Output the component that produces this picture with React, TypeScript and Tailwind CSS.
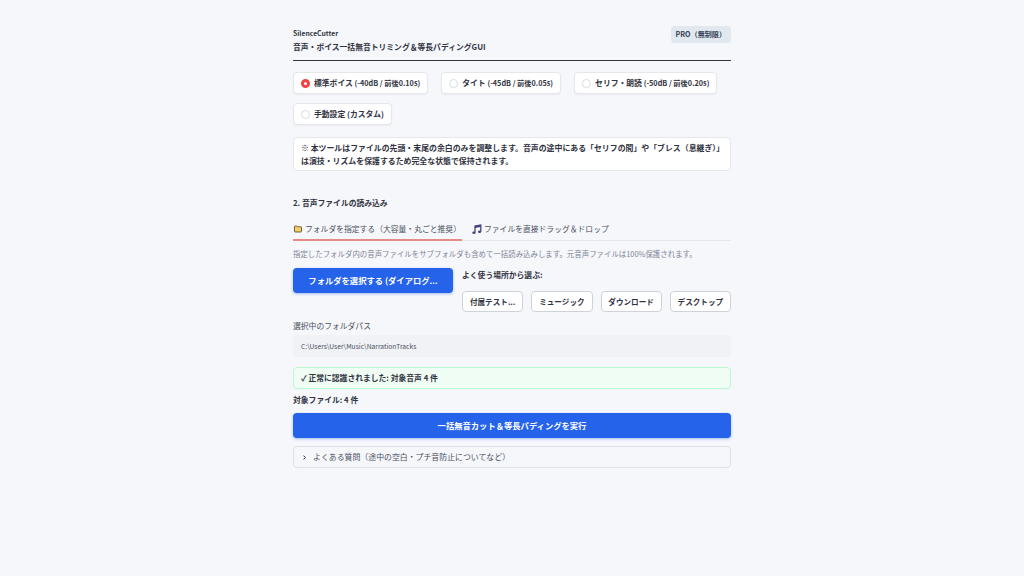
const font = "font-['Noto_Sans_CJK_JP',sans-serif]";

const presets = [
  { label: "標準ボイス", detail: "(-40dB / 前後0.10s)", selected: true },
  { label: "タイト", detail: "(-45dB / 前後0.05s)", selected: false },
  { label: "セリフ・朗読", detail: "(-50dB / 前後0.20s)", selected: false },
  { label: "手動設定", detail: "(カスタム)", selected: false },
];

const places = ["付属テスト...", "ミュージック", "ダウンロード", "デスクトップ"];

function FolderIcon() {
  return (
    <svg width="10" height="9" viewBox="0 0 10 9" className="shrink-0">
      <path
        d="M1.5 2.6c0-.4.2-.6.6-.6h1.7l.7.8h3.4c.4 0 .6.2.6.6v4c0 .4-.2.6-.6.6H2.1c-.4 0-.6-.2-.6-.6z"
        fill="#f3cf6b"
        stroke="#5f5330"
        strokeWidth="0.9"
      />
    </svg>
  );
}

function MusicIcon() {
  return (
    <svg width="10" height="11" viewBox="0 0 10 11" className="shrink-0">
      <path
        d="M3 8.5V2L8.8 1v6.4"
        fill="none"
        stroke="#4a3f7f"
        strokeWidth="1.3"
      />
      <path d="M3 2 8.8 1v2L3 4z" fill="#4a3f7f" />
      <ellipse cx="1.9" cy="8.7" rx="1.6" ry="1.3" fill="#4a3f7f" />
      <ellipse cx="7.6" cy="7.7" rx="1.6" ry="1.3" fill="#4a3f7f" />
    </svg>
  );
}

function PresetCard({
  label,
  detail,
  selected,
}: {
  label: string;
  detail: string;
  selected: boolean;
}) {
  const detailClassName = detail.includes("dB")
    ? "text-[7.25px]"
    : "text-[7.8px]";

  return (
    <div className="flex h-[22px] items-center gap-[4px] rounded border border-[#e5e7eb] bg-white px-[7px] shadow-[0_1px_2px_rgba(0,0,0,0.05)]">
      {selected ? (
        <span className="h-[9px] w-[9px] rounded-full border-[3px] border-[#ef4444] bg-white" />
      ) : (
        <span className="h-[9px] w-[9px] rounded-full border border-[#d9dbe0] bg-white" />
      )}
      <span className="text-[7.8px] font-bold text-[#31333f]">
        {label} <span className={detailClassName}>{detail}</span>
      </span>
    </div>
  );
}

export default function App() {
  return (
    <div className={`min-h-[576px] bg-[#f5f7fb] ${font}`}>
      <div className="mx-auto w-[438px] pt-[25px]">
        <header className="flex items-start justify-between border-b border-[#31333f] pb-[5px]">
          <div>
            <div className="text-[6.8px] font-bold leading-[16px] text-[#31333f]">
              SilenceCutter
            </div>
            <div className="mt-[-2px] text-[7.8px] font-bold leading-[16px] text-[#31333f]">
              音声・ボイス一括無音トリミング＆等長パディングGUI
            </div>
          </div>
          <span className="mt-px rounded bg-[#e2e8f0] px-[5px] text-[7.1px] font-bold leading-[17px] text-[#334155]">
            PRO（無制限）
          </span>
        </header>

        <div className="mt-[11px] flex flex-wrap gap-x-[13px] gap-y-[9px]">
          {presets.map((preset) => (
            <PresetCard key={preset.label} {...preset} />
          ))}
        </div>

        <div className="mt-[12px] rounded border border-[#e5e7eb] bg-white px-[7px] py-[3px] text-[7.9px] font-bold leading-[13px] text-[#31333f]">
          ※&#xFE0E; 本ツールはファイルの先頭・末尾の余白のみを調整します。音声の途中にある「セリフの間」や「ブレス（息継ぎ）」は演技・リズムを保護するため完全な状態で保持されます。
        </div>

        <h2 className="mt-[24px] text-[7.8px] font-bold leading-[16px] text-[#31333f]">
          2. 音声ファイルの読み込み
        </h2>

        <div className="mt-[9px] flex h-[21px] gap-[10px] border-b border-[#e5e7eb]">
          <div className="flex h-[21px] w-[169px] items-center gap-[2px] border-b-2 border-[#e58a84] pb-[2px] text-[7.8px] text-[#4b4f5c]">
            <FolderIcon />
            フォルダを指定する（大容量・丸ごと推奨）
          </div>
          <div className="flex items-center gap-[2px] pb-[2px] text-[7.8px] text-[#4b4f5c]">
            <MusicIcon />
            ファイルを直接ドラッグ＆ドロップ
          </div>
        </div>

        <p className="mt-[6px] text-[7.43px] leading-[14px] text-[#808495]">
          指定したフォルダ内の音声ファイルをサブフォルダも含めて一括読み込みします。元音声ファイルは100%保護されます。
        </p>

        <div className="mt-[7px] flex gap-[9px]">
          <button className="h-[25px] w-[160px] rounded bg-[#2563eb] text-[8.3px] font-bold text-white shadow-[0_1px_3px_rgba(37,99,235,0.4)]">
            フォルダを選択する (ダイアログ...
          </button>
          <div className="flex-1">
            <div className="text-[7.8px] font-bold leading-[13px] text-[#31333f]">
              よく使う場所から選ぶ:
            </div>
            <div className="mt-[10px] grid grid-cols-4 gap-[8px]">
              {places.map((place) => (
                <button
                  key={place}
                  className="h-[21px] rounded border border-[#cfd2d8] bg-white text-[7.6px] font-bold text-[#31333f]"
                >
                  {place}
                </button>
              ))}
            </div>
          </div>
        </div>

        <div className="mt-[6px] text-[7.8px] leading-[16px] text-[#4b4f5c]">
          選択中のフォルダパス
        </div>
        <div className="mt-[1px] flex h-[22px] items-center rounded bg-[#f0f2f6] px-[8px] text-[6.7px] text-[#4b4f5c]">
          C:\Users\User\Music\NarrationTracks
        </div>

        <div className="mt-[10px] flex h-[22px] items-center rounded border border-[#bbf7d0] bg-[#f0fdf4] px-[7px] text-[7.8px] font-bold text-[#31333f]">
          ✓ 正常に認識されました: 対象音声 4 件
        </div>

        <div className="mt-[3px] text-[7.8px] font-bold leading-[16px] text-[#31333f]">
          対象ファイル: 4 件
        </div>

        <button className="mt-[5px] h-[25px] w-full rounded bg-[#2563eb] text-[8.3px] font-bold text-white shadow-[0_1px_3px_rgba(37,99,235,0.4)]">
          一括無音カット＆等長パディングを実行
        </button>

        <div className="mt-[8px] flex h-[22px] items-center gap-[7px] rounded border border-[#dfe1e6] px-[9px] text-[7.9px] text-[#4b4f5c]">
          <svg width="3" height="5" viewBox="0 0 3 5" className="shrink-0">
            <path
              d="M.5.6 2.4 2.5.5 4.4"
              fill="none"
              stroke="#31333f"
              strokeWidth="1"
            />
          </svg>
          よくある質問（途中の空白・プチ音防止についてなど）
        </div>
      </div>
    </div>
  );
}
